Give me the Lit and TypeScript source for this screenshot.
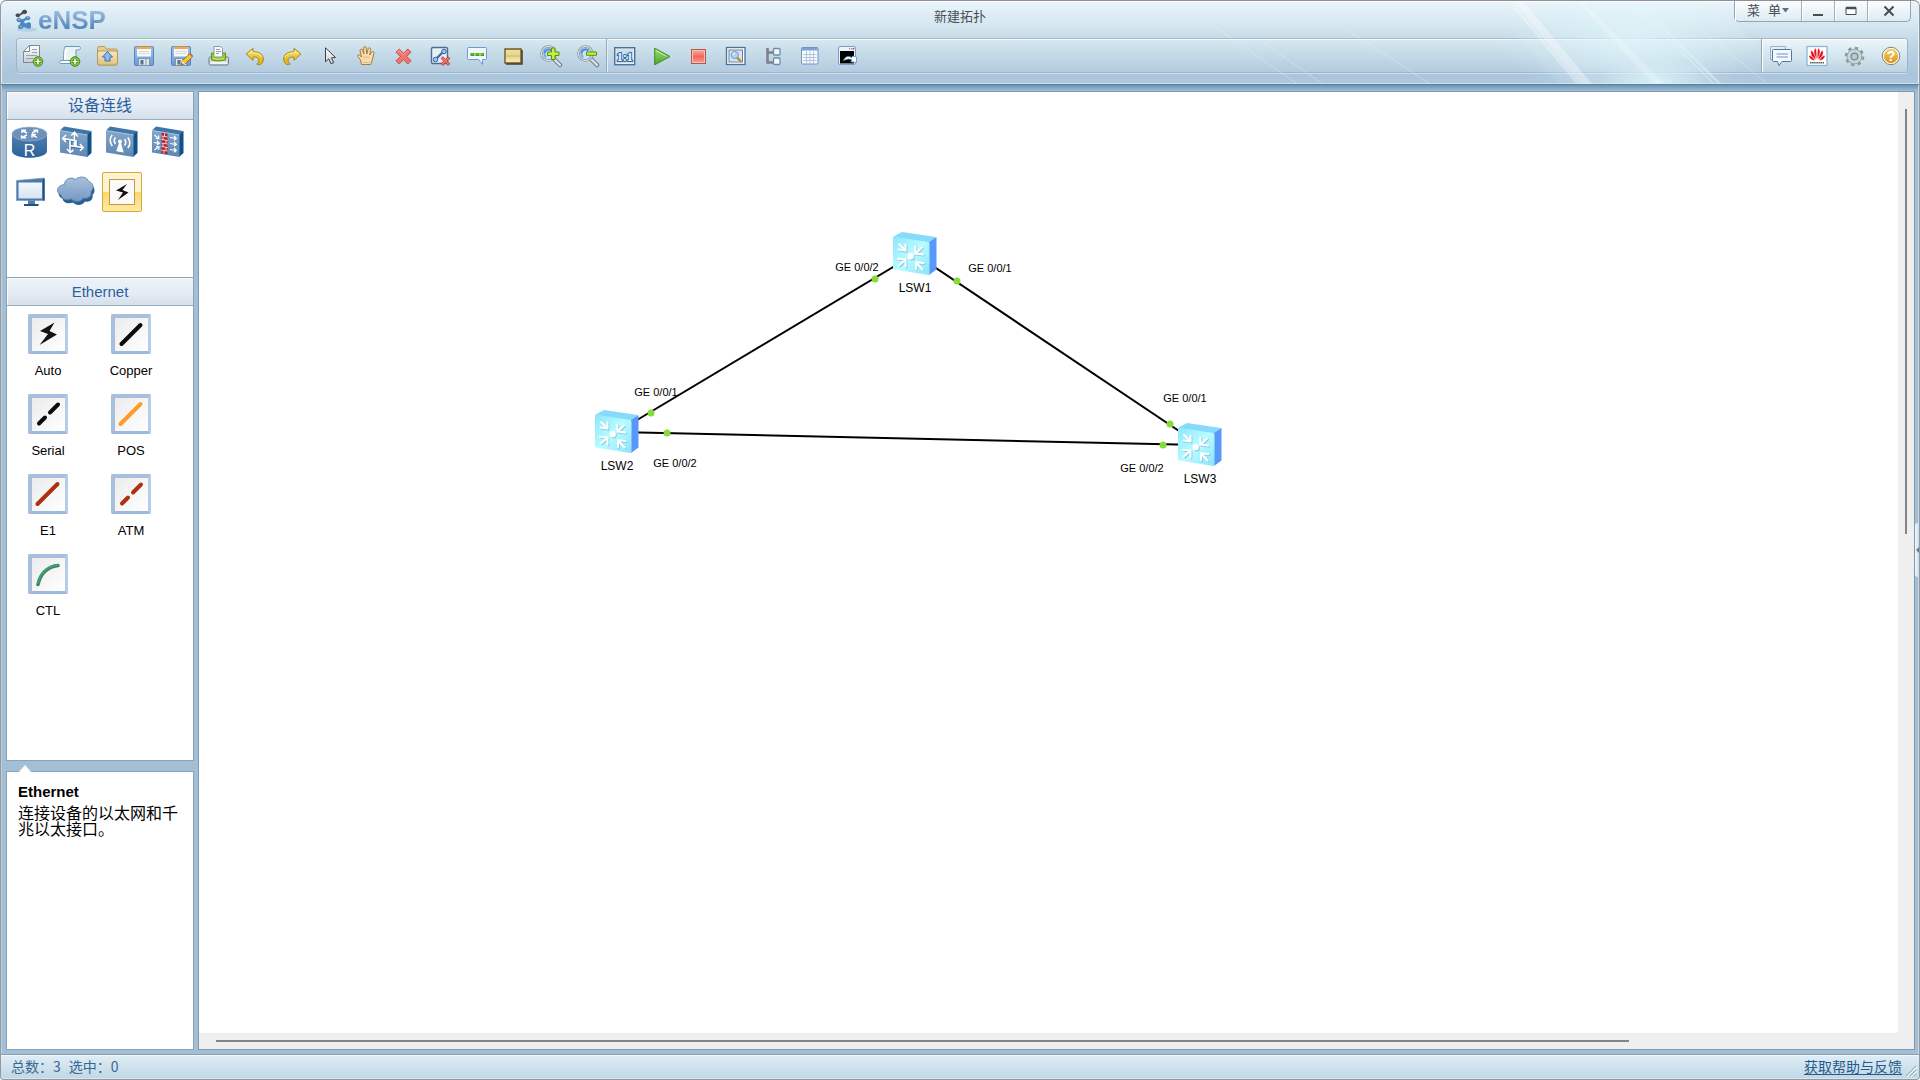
import { LitElement, html, css, svg, TemplateResult } from "lit";
import { customElement, property } from "lit/decorators.js";
import { styleMap } from "lit/directives/style-map.js";

type Art = TemplateResult;

const plusBadge = svg`
  <circle cx="17" cy="17.5" r="4.8" fill="#8fce3a" stroke="#3f8a16"/>
  <path d="M17 14.5v6M14 17.5h6" stroke="#2f6f10" stroke-width="3"/>
  <path d="M17 14.8v5.4M14.3 17.5h5.4" stroke="#fff" stroke-width="1.6"/>`;

const floppy = svg`
  <rect x="2.5" y="2.5" width="19" height="19" rx="1.5" fill="url(#g-blue)" stroke="#5585bd"/>
  <path d="M5 3h14v9.5H5z" fill="#f6f8fb"/>
  <path d="M5 2.5h14v2.6H5z" fill="#f8a944"/>
  <path d="M6.5 7.5h11M6.5 9.5h11" stroke="#d3d9e2"/>
  <path d="M6.5 14.5h11v7h-11z" fill="#dfe5ec" stroke="#8193aa"/>
  <path d="M8.5 16h3v4.5h-3z" fill="#5f7188"/>
  <path d="M14 15v6" stroke="#b5bfcc" stroke-width="2"/>`;

const undoShape = svg`
  <path d="M3.2 10 10 4.4v3.5c6.5-.4 11 2.6 10.2 8.3-.3 1.900-1.200 3.300-2.700 4.300-1 .3-3.200.1-3.800-.5 2-1.200 3-4 1.500-5.700-1.200-1.200-3-1.300-5.200-1.200v3.200z"
    fill="url(#g-gold)" stroke="#a98410" stroke-linejoin="round"/>
  <path d="M5 10l4-3.200v2.200c5-.3 9 1 10 4" fill="none" stroke="#fbf2a8" stroke-width="1"/>`;

const lens = svg`
  <path d="M14.500 14.500l6.500 6.500" stroke="#77818c" stroke-width="4.500" stroke-linecap="round"/>
  <path d="M15 15l6 6" stroke="#dfe3e8" stroke-width="2.300" stroke-linecap="round"/>
  <circle cx="9.500" cy="9.500" r="7" fill="#cfe4fa" fill-opacity=".8" stroke="#8794a3" stroke-width="2.600"/>
  <circle cx="9.500" cy="9.500" r="7" fill="none" stroke="#eef2f6" stroke-width="1"/>
  <path d="M5.500 9.500a4 4 0 0 1 7-2.700" fill="none" stroke="#4f8fdc" stroke-width="2.200"/>
  <path d="M5.300 9a4.200 4.200 0 0 0 2 4" fill="none" stroke="#6ea5e4" stroke-width="1.600"/>`;

const tools: Record<string, Art> = {
  newDoc: svg`
    <path d="M8.500 1.500h10v17h-16v-11z" fill="url(#g-paper)" stroke="#7d8894" stroke-linejoin="round"/>
    <path d="M2.500 7.500h6v-6z" fill="#fff" stroke="#7d8894" stroke-linejoin="round"/>
    <path d="M11 5.500h5M11 8.500h5M5 11.500h11M5 14.500h7" stroke="#9aa3ad"/>${plusBadge}`,
  newScroll: svg`
    <path d="M7 2.500h14c2 0 2 3.500-.5 3.300L18 6v12.500H4.500C6 17 5 7 7 2.500z" fill="#e9f4f9" stroke="#6d9bb4"/>
    <path d="M4 16.500h11c-1.500 1.500-.5 3 1 3H3c-2 0-2-3 1-3z" fill="#f8fcfe" stroke="#6d9bb4"/>
    <path d="M8 5c-1 4-.6 7-1.200 10" stroke="#fff" stroke-width="2" fill="none"/>${plusBadge}`,
  open: svg`
    <path d="M2.500 4.500q0-2 2-2h5l2 2.500h9q2 0 2 2V19q0 2-2 2h-16q-2 0-2-2z" fill="#e3cf96" stroke="#b89a57"/>
    <rect x="2.500" y="7" width="20" height="14" rx="2" fill="url(#g-folder)" stroke="#b89a57"/>
    <path d="M12.500 7.500l5 5.500h-2.500v4h-5v-4H7.500z" fill="#8db9f0" stroke="#3b6fb5" stroke-linejoin="round"/>`,
  save: floppy,
  saveAs: svg`${floppy}
    <path d="M12 21l1.500-4.500 7-6.500 3 3-7 6.500z" fill="#f8c531" stroke="#8a5a12" stroke-width=".8"/>
    <path d="M12 21l1.500-4.500 2.800 3z" fill="#f4dfb8"/><path d="M12 21l.6-1.900 1.200 1.200z" fill="#333"/>
    <path d="M20.500 10l3 3 .8-1.200-2.500-2.500z" fill="#d9643a"/>`,
  print: svg`
    <path d="M3 14.500q0-1.500 1.500-1.500h16.500q1.500 0 1.500 1.500v5q0 1.500-1.500 1.500h-16.500q-1.500 0-1.500-1.500z" fill="#d5dbe1" stroke="#6e7883"/>
    <path d="M5.500 9h14v7q-7 2-14 0z" fill="#94cf26" stroke="#64961c"/>
    <path d="M8 2.500h6.500l2 2V13H8z" fill="#fbfcfd" stroke="#8b97a4"/>
    <path d="M10 5.500h4M10 7.500h5M10 9.500h3" stroke="#8f9aa6"/>
    <path d="M7 14.500q5.500 1.500 11 0" stroke="#c9f063" fill="none"/>
    <path d="M4.500 19h16.500" stroke="#fafbfc" stroke-width="1.500"/>`,
  undo: undoShape,
  redo: svg`<g transform="translate(24 0) scale(-1 1)">${undoShape}</g>`,
  pointer: svg`
    <path d="M8.500 3.800v14l3.300-3 2.200 5 2.700-1.200-2.200-4.800 4-.3z" fill="url(#g-paper)" stroke="#3e4247" stroke-linejoin="round"/>`,
  hand: svg`
    <path d="M7.500 20.500 6.500 16 3.700 12.300c-.6-1.400 1.200-2 2.400-.7L7.500 13 6 6.800c-.2-1.800 2-2.300 2.500-.6L9.800 10 9.600 4c.1-1.900 2.500-1.900 2.700 0l.5 6 1.400-5.300c.6-1.600 2.700-1.200 2.400.6L15.800 11l2-3c1.200-1.300 2.800-.4 2.200 1.200L18.500 15l-1.700 5.500z"
      fill="#f7dcae" stroke="#a87b3e" stroke-linejoin="round"/>
    <path d="M9 13.500q4-1.500 7 .5M8.500 18.500h7.500" stroke="#e3bb7d" fill="none"/>`,
  remove: svg`
    <path d="M5 8.200 8.200 5l4.300 4.300L16.800 5 20 8.200l-4.300 4.300 4.300 4.300-3.200 3.200-4.300-4.300L8.200 20 5 16.800l4.300-4.300z" fill="#f0756b" stroke="#c4504a" stroke-linejoin="round"/>
    <path d="M6.500 8.200 8.200 6.500l4.300 4.300 4.300-4.300" fill="none" stroke="#f9a79d"/>`,
  removeLink: svg`
    <rect x="3.500" y="3.500" width="16" height="16" rx="1.500" fill="#e8eff6" stroke="#4f6d92" stroke-width="1.400"/>
    <path d="M7 16l9-9" stroke="#3f6fa8" stroke-width="2.400"/>
    <circle cx="7.500" cy="15.500" r="2.300" fill="#9fc4ea" stroke="#3a679f"/><circle cx="16" cy="7.500" r="2.300" fill="#9fc4ea" stroke="#3a679f"/>
    <path d="M13 14.500l1.800-1.800 2.700 2.600 2.700-2.600 1.600 1.800-2.600 2.600 2.600 2.600-1.600 1.700-2.700-2.600-2.700 2.600-1.700-1.700 2.600-2.600z" fill="#ef7468" stroke="#a8322c" stroke-width=".8"/>`,
  comment: svg`
    <path d="M3.500 3.500h17q1 0 1 1v10q0 1-1 1H17.500v5l-4-5h-10q-1 0-1-1v-10q0-1 1-1z" fill="#f1f7fd" stroke="#6f9ad0" stroke-linejoin="round"/>
    <path d="M5.500 10.500h4M10.500 10.500h4M15.500 10.500h3.500" stroke="#3f9d14" stroke-width="3"/><path d="M6.500 10h2M11.500 10h2M16 10h2" stroke="#9be03a"/>`,
  rect: svg`
    <path d="M3 5h16v14H3z" fill="url(#g-note)" stroke="#6d5a24" stroke-width="1.400"/>
    <path d="M20 6v14H4" fill="none" stroke="#4d3f17" stroke-width="1.500"/>
    <path d="M4.500 12h13" stroke="#cdb866"/>`,
  zoomIn: svg`${lens}
    <path d="M12.500 4h3.500v4h4v3.500h-4v4h-3.500v-4h-4V8h4z" fill="#c6f03a" stroke="#4e9410"/>`,
  zoomOut: svg`${lens}<path d="M10.500 8h10v3.300h-10z" fill="#c6f03a" stroke="#4e9410"/>`,
  actual: svg`
    <rect x="1.700" y="3.700" width="20" height="17" fill="#e3ecf4" stroke="#4d7298" stroke-width="1.400"/>
    <rect x="3.500" y="5.500" width="16.500" height="13.500" fill="#ccdeed"/>
    <text class="ratio" x="11.700" y="16.500">1:1</text>`,
  play: svg`
    <path d="M4.700 4.200 20 12.500 4.700 20.800z" fill="url(#g-green)" stroke="#3d8a25" stroke-linejoin="round"/>
    <path d="M6 6.500l10.500 5.800" stroke="#c9efae" fill="none"/>`,
  stop: svg`<rect x="4.500" y="5.500" width="14" height="14" fill="url(#g-red)" stroke="#b0574e"/>
    <rect x="5.500" y="6.500" width="12" height="12" fill="none" stroke="#fbc1b8"/>`,
  inspect: svg`
    <rect x="2.500" y="3.500" width="18.500" height="17" fill="#fbfdfe" stroke="#4d7298" stroke-width="1.300"/>
    <rect x="5" y="6" width="13.500" height="12" fill="#d7e4f0" stroke="#6585a8"/>
    <path d="M13 13.500l3.500 3.500" stroke="#b78a2d" stroke-width="2.400" stroke-linecap="round"/>
    <circle cx="10.800" cy="11" r="3.600" fill="#a9d6f8" stroke="#8296ac"/><path d="M9 11a2 2 0 0 1 2-2" stroke="#fff" fill="none"/>`,
  tree: svg`
    <path d="M6.500 4v14.500H13M6.500 8.500H13" stroke="#7c828a" stroke-width="2.600" fill="none"/>
    <rect x="12.500" y="4.500" width="6.500" height="6.500" rx="1" fill="#f3f7fb" stroke="#6e8bab" stroke-width="1.300"/>
    <rect x="12.500" y="14" width="6.500" height="6.500" rx="1" fill="#f3f7fb" stroke="#6e8bab" stroke-width="1.300"/>`,
  table: svg`
    <rect x="3.500" y="3.500" width="16.500" height="16.500" rx="1" fill="#f7fafd" stroke="#6f94c2"/>
    <path d="M4 4h15.500v2.500H4z" fill="#7ba3d4"/>
    <path d="M5 10.500h13.500M5 13.500h13.500M5 16.500h13.500M8.500 7.500v12M12 7.500v12M15.500 7.500v12" stroke="#b3c5dc"/>`,
  terminal: svg`
    <rect x="3.500" y="2.500" width="17" height="18" rx="1.500" fill="#edf4fb" stroke="#7c9cc4"/>
    <path d="M5 7h14v12.500H5z" fill="#000"/>
    <path d="M14 4.700h1.200M16.200 4.700h1.200" stroke="#8793a3" stroke-width="1.400"/><path d="M17.800 4.700h1.400" stroke="#e02020" stroke-width="1.600"/>
    <path d="M8.500 16.500c1.500-4 5-5 8-3l1.300-1.500 3.700 1v5.500l-5.800-.8 1.300-1.700c-2.500-1.500-4.500-1-8.500.5z" fill="#fff" stroke="#5c92cf" stroke-width=".8"/>`,
  chat: svg`
    <path d="M2.500 2.500h15v13h-15z" fill="#dfeef8" stroke="#8fb3d3"/>
    <path d="M5.500 5.500h17q1 0 1 1v10q0 1-1 1h-8.500l-3 4-1.500-4h-4q-1 0-1-1v-10q0-1 1-1z" fill="#f4f9fd" stroke="#5177a6" stroke-linejoin="round"/>
    <path d="M8.500 10h11.500M8.500 13h11.500" stroke="#6f94c4"/>`,
  huawei: svg`
    <rect x="2" y="2.500" width="20" height="19" fill="#fff" stroke="#8db6e0" stroke-width="1.300"/>
    <g fill="#e2131b" stroke="#fff" stroke-width=".5"><path d="M11.700 15.500C8.500 11 8.200 6 10.300 4c1.500 1 1.800 7 1.400 11.500zM12.300 15.500c3.200-4.500 3.500-9.500 1.400-11.500-1.500 1-1.800 7-1.400 11.500z"/>
    <path d="M10.900 15.700C6.500 13.500 4.800 9.500 6.300 6.300c2 .7 4.200 6 4.600 9.400zM13.100 15.700c4.400-2.200 6.100-6.200 4.600-9.400-2 .7-4.200 6-4.600 9.400z"/>
    <path d="M10.200 16.300c-4 .3-6.400-2-6.200-5 2 .2 5 2.700 6.200 5zM13.800 16.300c4 .3 6.400-2 6.200-5-2 .2-5 2.700-6.200 5z"/></g>
    <path d="M5 18.800h14" stroke="#555" stroke-width="1.600" stroke-dasharray="1.500 .6"/>`,
  gear: svg`
    <circle cx="12.500" cy="12.500" r="8.300" fill="none" stroke="#8d9b9f" stroke-width="3" stroke-dasharray="3.260 3.260"/>
    <circle cx="12.500" cy="12.500" r="5.500" fill="none" stroke="#8d9b9f" stroke-width="4.500"/>
    <circle cx="12.500" cy="12.500" r="5.500" fill="none" stroke="#c9d6d6" stroke-width="3"/>
    <circle cx="12.500" cy="12.500" r="3.300" fill="#b7ccd8" stroke="#6f8390"/>`,
  help: svg`
    <circle cx="12" cy="12" r="8.700" fill="#fff" stroke="#8c7f66"/>
    <circle cx="12" cy="12" r="7.200" fill="url(#g-amber)"/>
    <text class="mark" x="12" y="17">?</text>`,
};

const box3d = svg`
  <path d="M4 8.500 8 4.500l27 4.500-3 4z" fill="#3f76a9"/>
  <path d="M31 13l4.500-4.200V31L31 35z" fill="#0f5088"/>
  <path d="M4 8.500 31.500 13v22L4 30.500z" fill="url(#g-steel)"/>
  <path d="M4 8.500 31.500 13" stroke="#a9c1da"/>`;

const devices: Record<string, Art> = {
  router: svg`
    <path d="M2 12v17c0 9 35 9 35 0V12z" fill="url(#g-drum)"/>
    <ellipse cx="19.500" cy="12" rx="17.500" ry="7" fill="#6d92ba" stroke="#93b0cd" stroke-width=".6"/>
    <g stroke="#fff" stroke-width="1.400" fill="none"><path d="M17 11l-5-2.500M12 11V8.300h4M22 11l5-2.300M23.500 8.200h4v2.600M17 13l-5 2.300M16 15.800h-4.500v-2.600M22 13l5 2.300M22 15.800v-3.300h4"/></g>
    <text class="letter" x="19.500" y="34">R</text>`,
  switch: svg`${box3d}
    <g stroke="#173f6b" stroke-opacity=".4" stroke-width="1.800" fill="none" transform="translate(.8 1)"><path d="M7 16.500l13 2.200v6M18.500 10.500V24M14 18v12M13.500 23.500l13 2"/></g>
    <g stroke="#fff" stroke-width="1.600" fill="none"><path d="M7 16.500l13 2.200v6M18.500 10.500V24M14 18v12M13.500 23.500l13 2M10 13l-3.300 3.500L10 20M15.300 13.500l3.200-3.300 3.200 4.400M11 27l3.200 3.500 3.200-2.500M24 22l3.200 3.600-3.200 3"/></g>`,
  ap: svg`${box3d}
    <g stroke="#fff" stroke-width="1.600" fill="none"><path d="M13.500 15.500q-2.500 2.800 0 6.500M10.200 13q-4 4.500 0 11M22.500 17q2.500 3.500 0 6.500M25.800 15.500q4 5.800 0 10.500"/></g>
    <circle cx="18" cy="19.500" r="2" fill="#fff"/><path d="M17.400 20h1.300l3 10.500-7.500-1.200z" fill="#fff"/>`,
  firewall: svg`${box3d}
    <path d="M13.500 10.800l6 1v20.500l-6-1z" fill="#b3202c"/>
    <path d="M13.500 14l6 1M13.500 17.500l6 1M13.500 21l6 1M13.500 24.500l6 1M13.500 28l6 1M16.500 11.500v3M15 15v3M18 18.500v3M15 21.500v3M18 25v3M16 28.500v3" stroke="#fff" stroke-width=".8"/>
    <g stroke="#fff" stroke-width="1.200" fill="none"><path d="M6.500 13l4 3.500M10.700 13.500v3.300l-3-.3M6 20.500l5 .8M9 18.800l2.300 2.500-2.300 1.500M6.500 28l4-3M8 24.500l3 .3-.3 3M22 15.500l6 1M26 14l2.300 2.500-2.300 1.800M22 21.500l6 1M26 20l2.300 2.500-2.300 1.800M22 27.500l6 1M26 26l2.300 2.500-2.300 1.800"/></g>`,
  pc: svg`
    <path d="M6.500 8.500 34.500 6v22.500H6.500z" fill="#4a7aa9" stroke="#7c9fc2" stroke-width=".8"/>
    <path d="M8.500 10.500h23.500V26.500H8.500z" fill="url(#g-screen)"/>
    <path d="M33 7h1.500v21.500H33z" fill="#1a4f84"/>
    <path d="M18 28.500h7v3.500h-7z" fill="#547ca5"/><path d="M14 32h14.500v2H14z" fill="#1d5488"/>`,
  cloud: svg`
    <path d="M9 14c0-6 7-8 11-5 4-4 12-3 13 2 5 1 6 7 2.500 10 1 5-3 7.500-7.500 6.500-3 4.500-9 4.500-12 1-5 2-10 0-10.500-4C0 23 0 15 9 14z" fill="#2a6093" transform="translate(1 2)"/>
    <path d="M8.500 12.500c0-6 7-8 11-5 4-4 12-3 13 2 5 1 6 7 2.500 10 1 5-3 7.500-7.500 6.500-3 4.500-9 4.500-12 1-5 2-10 0-10.500-4-5-1.500-5.500-9.500 3.500-10.500z" fill="url(#g-cloud)" stroke="#557fab" stroke-width=".8"/>`,
  link: svg`
    <rect x="7.500" y="7.500" width="25" height="25" fill="#fbfaf6" stroke="#b89c51"/>
    <path d="M25 12 14 18.500l7 2L16 28l10.500-7.500-6-2.500z" fill="#111"/>`,
};

const cables: { name: string; art: Art }[] = [
  { name: "Auto", art: svg`<path d="M26.500 8.500 12 17l8 3-8.500 11L29 20.500l-7.500-3.500z" fill="#14140f"/>` },
  { name: "Copper", art: svg`<path d="M10.500 30 29.500 11" stroke="#0a0a0c" stroke-width="4" stroke-linecap="round"/>` },
  { name: "Serial", art: svg`<path d="M11 29.500l6-6M22 18.500l8-8" stroke="#0a0a0c" stroke-width="4" stroke-linecap="round"/>` },
  { name: "POS", art: svg`<path d="M9.500 30 29.500 10" stroke="#ff9a2e" stroke-width="4" stroke-linecap="round"/>` },
  { name: "E1", art: svg`<path d="M9.500 30 29.500 10" stroke="#ad3110" stroke-width="4" stroke-linecap="round"/>` },
  { name: "ATM", art: svg`<path d="M11 29.500l6-6M22 18.500l8-8" stroke="#ad3110" stroke-width="4" stroke-linecap="round"/>` },
  { name: "CTL", art: svg`<path d="M10 30.500C12 21 18.500 13 30 11.500" fill="none" stroke="#4b7a62" stroke-width="3.600" stroke-linecap="round"/><path d="M10 29.500C12 20 18 12.500 29.500 11" fill="none" stroke="#31a873" stroke-width="2" stroke-linecap="round"/>` },
];

const gradient = (id: string, ...stops: string[]) => svg`
  <linearGradient id=${id} x1="0" y1="0" x2="0" y2="1">
    ${stops.map((c, i) => svg`<stop offset=${i / (stops.length - 1)} stop-color=${c}/>`)}
  </linearGradient>`;

const gradients: Record<string, string[]> = {
  "g-blue": ["#9cc4f0", "#6b9bd4"],
  "g-gold": ["#f7e36b", "#dcae16"],
  "g-paper": ["#ffffff", "#c9ced4"],
  "g-folder": ["#f6e9c4", "#dfc17a"],
  "g-note": ["#efe0a0", "#e6d68c", "#f5edc0"],
  "g-green": ["#a4dc78", "#4aa52c"],
  "g-red": ["#fbb0a5", "#f2685a", "#f8a397"],
  "g-amber": ["#f6d173", "#dc9410"],
  "g-steel": ["#85a6c9", "#5d87b4"],
  "g-drum": ["#5081b2", "#2a6297"],
  "g-screen": ["#f3f7fd", "#d5e3f4"],
  "g-cloud": ["#a8c0dd", "#7598c2"],
};

/** Inline picture on a square grid; the grid is as wide as it is drawn. */
const picture = (art: Art, size: number) => html`
  <svg class="picture" width=${size} height=${size} viewBox="0 0 ${size} ${size}" aria-hidden="true">
    <defs>${Object.entries(gradients).map(([id, stops]) => gradient(id, ...stops))}</defs>${art}</svg>`;

const pictureStyles = css`
  .picture { display: block; flex: none; }
  .ratio { font: bold 12px "Liberation Serif", serif; fill: #eef6fc; stroke: #2f6aa3; stroke-width: 2px; paint-order: stroke; text-anchor: middle; }
  .mark { font: bold 14px "Liberation Sans", sans-serif; fill: #fff; text-anchor: middle; }
  .letter { font: 16px "Liberation Sans", sans-serif; fill: #fff; text-anchor: middle; }
  button { font: inherit; color: inherit; background: none; border: 0; padding: 0; margin: 0; display: flex; align-items: center; justify-content: center; }
`;

@customElement("tool-bar")
class ToolBar extends LitElement {
  static styles = [pictureStyles, css`
    :host { display: flex; height: 33px; margin: 0 11px 0 15px; border: 1px solid #9eb3c6; border-top-color: #a9b9c8; border-radius: 4px;
      background: linear-gradient(#d8e8f1, #c9dee9 35%, #b3cbe0); box-shadow: inset 0 1px #f2f9fc, 0 1px #d0dfeb; }
    .group { display: flex; gap: 5px; align-items: center; }
    .group button { width: 32px; height: 30px; }
    .zoomed { margin-left: 2px; border-left: 1px solid #94a8bb; padding-left: 2px; box-shadow: inset 1px 0 #e5f0f7; }
    .aside { margin-left: auto; border-left: 1px solid #92a7b8; padding-left: 2px; border-radius: 0 3px 3px 0;
      background: linear-gradient(#edf6fa, #d5e6ef 50%, #bcd3e2); box-shadow: inset 1px 1px #fff; }
  `];

  private buttons(items: [string, string][]) {
    return items.map(([key, label]) => html`<button type="button" title=${label} aria-label=${label}>${picture(tools[key], 24)}</button>`);
  }

  render() {
    return html`
      <div class="group">${this.buttons([
        ["newDoc", "新建拓扑"], ["newScroll", "新建试卷工程"], ["open", "打开文件"], ["save", "保存"],
        ["saveAs", "另存为"], ["print", "打印"], ["undo", "撤销"], ["redo", "恢复"],
        ["pointer", "恢复鼠标"], ["hand", "拖动"], ["remove", "删除"], ["removeLink", "删除连线"],
        ["comment", "文本"], ["rect", "调色板"], ["zoomIn", "放大"], ["zoomOut", "缩小"]])}</div>
      <div class="group zoomed">${this.buttons([
        ["actual", "重置比例"], ["play", "开启设备"], ["stop", "停止设备"], ["inspect", "数据抓包"],
        ["tree", "显示所有接口"], ["table", "显示网格"], ["terminal", "打开拓扑中设备的命令行"]])}</div>
      <div class="group aside">${this.buttons([
        ["chat", "论坛"], ["huawei", "官网"], ["gear", "设置"], ["help", "帮助"]])}</div>`;
  }
}

@customElement("app-header")
class AppHeader extends LitElement {
  static styles = [pictureStyles, css`
    :host { display: flex; flex-direction: column; height: 83px; position: relative; overflow: hidden;
      border-top: 1px solid #918f98; border-bottom: 1px solid #5d8199; border-radius: 6px 6px 0 0;
      background: linear-gradient(#e9f5fb, #d4e6ef 30%, #c2d7e6 50%, #a9c4dc 88%, #aec8de);
      box-shadow: inset 0 1px #fff, inset 0 -1px #c9dfeb, inset 1px 0 #e6f1f8, inset -1px 0 #e6f1f8; }
    .top { display: grid; grid-template-columns: 1fr auto 1fr; height: 37px; padding: 0 8px; align-items: start; }
    .brand { display: flex; align-items: center; height: 30px; padding: 4px 0 0 5px; }
    .word { font: bold 26px/28px "Liberation Sans", Arial, sans-serif; color: transparent;
      background: linear-gradient(#9cc0e6 15%, #4f80b6 85%); background-clip: text; -webkit-background-clip: text; }
    .title { margin: 0; padding-top: 5px; font: 13px/20px "Noto Sans CJK SC", sans-serif; color: #4a4f54; }
    .controls { justify-self: end; display: flex; height: 20px; border: 1px solid #9aa2aa; border-top: 0; border-radius: 0 0 5px 5px;
      background: linear-gradient(#fbfdfe, #dcebf3); color: #444b52; font: 13px/16px "Noto Sans CJK SC", sans-serif; position: relative; z-index: 1; }
    .controls button { width: 33px; border-left: 1px solid #a5adb4; box-shadow: inset 1px 0 #fff; }
    .controls .menu { width: 66px; border-left: 0; gap: 8px; padding-bottom: 2px; }
    .controls .close { width: 43px; }
    .last { display: flex; align-items: center; gap: 1px; }
    .shine { position: absolute; top: 0; right: 0; pointer-events: none; }
    tool-bar { flex: none; }
  `];

  render() {
    return html`
      <div class="top">
        <div class="brand">
          <svg class="picture" width="24" height="26" viewBox="0 0 24 26" aria-hidden="true">
            <ellipse cx="13" cy="22.500" rx="10" ry="2" fill="#aac8e6" opacity=".7"/>
            <path d="M1.500 8.500c0-2 2.500-2.500 4-1.500C6.500 6.500 7 5.500 8 5c0-2.500 4.500-3 5-.5.5 2-1.500 3-3.500 2.300-1 .4-2 1-3 1.200 0 2.500-4.500 3-5 .5z" fill="#4a4b4f"/>
            <path d="M2.500 12.500c.5-2 3.500-2.300 4.500-.5 1.500.5 3 0 4-1 .5-2.300 4.800-2.500 5.300-.2.400 2-2 3-3.800 2.200-1 .3-2 1-2.800 2 .8.8 1.600 1.400 2.800 1.300 1-1.600 4.200-1.200 4.500.8v2.400c.5 2.500-3.800 3.200-5 1h-3c-1 2.400-5 2-5-.5 0-1.500 1-2.300 2-2.700.4-1 .5-1.500.3-2.300C4.500 15.500 2 14.500 2.500 12.500z" fill="#4f87c0"/>
            <path d="M4 12.300l2 .2M6 19l1.500.5M13 11l1.500-.5" stroke="#a9cdf0"/>
          </svg>
          <span class="word">eNSP</span>
        </div>
        <h1 class="title">新建拓扑</h1>
        <div class="controls">
          <button class="menu" type="button"><span>菜</span><span class="last">单
            <svg width="7" height="5" viewBox="0 0 7 5" aria-hidden="true"><path d="M0 0h7L3.500 4.500z" fill="#666d74"/></svg></span></button>
          <button type="button" aria-label="最小化"><svg width="12" height="12" viewBox="0 0 12 12"><path d="M1 10h10" stroke="#474c52" stroke-width="2"/></svg></button>
          <button type="button" aria-label="最大化"><svg width="12" height="12" viewBox="0 0 12 12"><path d="M1 2.500h10v7H1z" fill="#fff" stroke="#474c52"/><path d="M1 3h10" stroke="#474c52" stroke-width="2.500"/></svg></button>
          <button class="close" type="button" aria-label="关闭"><svg width="12" height="12" viewBox="0 0 12 12"><path d="M1.500 1.500l9 9M10.500 1.500l-9 9" stroke="#474c52" stroke-width="2"/></svg></button>
        </div>
      </div>
      <tool-bar></tool-bar>
      <svg class="shine" width="760" height="84" viewBox="0 0 760 84" aria-hidden="true">
        <defs>
          <radialGradient id="glow"><stop offset="0" stop-color="#d8f4fa" stop-opacity=".75"/><stop offset="1" stop-color="#d8f4fa" stop-opacity="0"/></radialGradient>
          <linearGradient id="veil"><stop offset="0" stop-color="#fff" stop-opacity="0"/><stop offset=".5" stop-color="#fff" stop-opacity=".16"/><stop offset="1" stop-color="#fff" stop-opacity="0"/></linearGradient>
        </defs>
        <ellipse cx="470" cy="40" rx="130" ry="60" fill="url(#glow)"/>
        <ellipse cx="500" cy="80" rx="60" ry="22" fill="url(#glow)"/>
        <path d="M330 0h230l70 84H400z" fill="url(#veil)"/>
        <path d="M354 0h10l70 84h-12z" fill="#fff" opacity=".35"/><path d="M349 0h3l70 84h-4z" fill="#fff" opacity=".3"/>
        <path d="M418 0h6l83 84h-12z" fill="#fff" opacity=".22"/>
        <path d="M476 0h2l86 84h-4zM471 0h2l84 84h-2z" fill="#dff9fa" opacity=".45"/>
        <path d="M540 27 610 84M177 22 273 84M43 17l97 67M105 42l60 42" stroke="#e4fafd" opacity=".35" fill="none"/>
      </svg>`;
  }
}

@customElement("side-palette")
class SidePalette extends LitElement {
  static styles = [pictureStyles, css`
    :host { display: flex; flex-direction: column; width: 188px; flex: none; }
    section { background: #fff; border: 1px solid #8aa3bb; box-sizing: border-box; }
    h2 { margin: 0; height: 28px; display: flex; align-items: center; justify-content: center; box-sizing: border-box;
      border-bottom: 1px solid #97abc2; background: linear-gradient(#eef3f9, #e3ebf4 60%, #d5e0eb); box-shadow: inset 1px 1px #f9fbfd;
      font: 15px/20px "Liberation Sans", Arial, sans-serif; color: #2d5f9b; }
    .cjk { font: 16px/20px "Noto Sans CJK SC", sans-serif; padding-bottom: 3px; }
    .kinds { display: grid; grid-template-columns: repeat(4, 40px); gap: 10px 6px; padding: 2px 3px; height: 153px; align-content: start; }
    .kinds button { width: 40px; height: 40px; }
    .kinds .chosen { border: 1px solid #d9a83a; border-radius: 2px; background: linear-gradient(#fdf3cf 50%, #fbd768 50%, #fdeaa4); }
    .list { flex: 1; border-top: 0; }
    .cables { display: grid; grid-template-columns: 82px 82px; gap: 15px 1px; padding-top: 8px; }
    .cable { flex-direction: column; gap: 9px; font: 13px/16px "Liberation Sans", Arial, sans-serif; color: #000; }
    .tile { width: 34px; height: 34px; border: 3px solid #a4c0e2; border-right-color: #b5cceb; border-bottom-color: #9db9dc;
      border-radius: 2px; background: linear-gradient(135deg, #ebebed, #fff); box-shadow: inset 1px 1px #b0bccb; }
    .tile .picture { margin: -3px; }
    .info { position: relative; height: 279px; margin-top: 10px; padding: 12px 7px 12px 11px; }
    .info::before { content: ""; position: absolute; left: 11px; top: -7px; width: 14px; height: 8px; background: #fff; clip-path: polygon(50% 0, 100% 100%, 0 100%); }
    h3 { margin: 0 0 4px; font: bold 15px/16px "Liberation Sans", Arial, sans-serif; color: #000; }
    p { margin: 0; font: 16px/16px "Noto Sans CJK SC", sans-serif; color: #000; }
  `];

  render() {
    const kinds: [string, string][] = [["router", "路由器"], ["switch", "交换机"], ["ap", "无线局域网"], ["firewall", "防火墙"], ["pc", "终端"], ["cloud", "其他设备"], ["link", "设备连线"]];
    return html`
      <section>
        <h2 class="cjk">设备连线</h2>
        <div class="kinds">
          ${kinds.map(([key, label]) => html`<button type="button" class=${key === "link" ? "chosen" : ""} title=${label} aria-label=${label}>${picture(devices[key], 40)}</button>`)}
        </div>
      </section>
      <section class="list">
        <h2>Ethernet</h2>
        <div class="cables">
          ${cables.map((c) => html`<button type="button" class="cable"><span class="tile">${picture(c.art, 40)}</span>${c.name}</button>`)}
        </div>
      </section>
      <section class="info">
        <h3>Ethernet</h3>
        <p>连接设备的以太网和千兆以太接口。</p>
      </section>`;
  }
}

interface Point { x: number; y: number }
interface Device extends Point { name: string }
interface Port extends Point { name: string; dot: Point }

@customElement("topology-canvas")
class TopologyCanvas extends LitElement {
  @property({ attribute: false }) devices: Device[] = [
    { name: "LSW1", x: 716, y: 162 },
    { name: "LSW2", x: 418, y: 340 },
    { name: "LSW3", x: 1001, y: 353 },
  ];
  @property({ attribute: false }) ports: Port[] = [
    { name: "GE 0/0/2", x: 658, y: 175, dot: { x: 676, y: 187 } },
    { name: "GE 0/0/1", x: 791, y: 176, dot: { x: 758, y: 189 } },
    { name: "GE 0/0/1", x: 457, y: 300, dot: { x: 452, y: 321 } },
    { name: "GE 0/0/2", x: 476, y: 371, dot: { x: 468, y: 341 } },
    { name: "GE 0/0/1", x: 986, y: 306, dot: { x: 971, y: 332 } },
    { name: "GE 0/0/2", x: 943, y: 376, dot: { x: 964, y: 353 } },
  ];

  static styles = css`
    :host { flex: 1; min-width: 0; display: grid; grid-template: 1fr 16px / 1fr 16px; background: #efefef; border: 1px solid #8199b0; }
    .sheet { position: relative; background: #fff; overflow: hidden; border-radius: 0 0 3px 0; }
    .links { position: absolute; left: 0; top: 0; width: 100%; height: 100%; }
    .device, .port { position: absolute; transform: translate(-50%, -50%); white-space: nowrap; color: #000; font: 12px/14px "Liberation Sans", Arial, sans-serif; }
    .device { transform: translate(-22px, -22px); width: 44px; display: flex; flex-direction: column; align-items: center; gap: 5px; }
    .device svg { display: block; }
    .port { font-size: 11px; }
    .bar { display: flex; }
    .vertical { flex-direction: column; padding: 17px 0 0 7px; }
    .horizontal { padding: 7px 0 0 17px; }
    .thumb { background: #858585; }
    .vertical .thumb { width: 2px; height: 46%; }
    .horizontal .thumb { height: 2px; width: 84%; }
  `;

  private chip() {
    return html`<svg width="44" height="44" viewBox="0 0 44 44" aria-hidden="true">
      <defs><linearGradient id="face" x1="0" y1="0" x2="1" y2="1"><stop offset="0" stop-color="#8ee6fc"/><stop offset=".5" stop-color="#b8fcff"/><stop offset="1" stop-color="#8ce3fb"/></linearGradient></defs>
      <path d="M0 6q0-1.500 1.500-2L9 0l34 5-6.500 5.500z" fill="#86dafc"/>
      <path d="M35.500 10.500 43.500 5v32.500L36 43z" fill="#5a97fb"/>
      <path d="M0 6q0-1.500 1.500-1.200L35 10q1.500.3 1.500 1.800V42q0 1.200-1.500 1L1.500 37.500Q0 37.200 0 36z" fill="url(#face)"/>
      ${[["#86cbe4", 0.9], ["#ffffff", 0]].map(([color, shift]) => svg`
        <g transform="translate(${shift} ${shift})" stroke=${color} stroke-width="2" fill="none" stroke-linecap="round" stroke-linejoin="round">
          <path d="M6 12l6.500 6.500M12.500 12.500V18.500L5.500 17.500M29 15.500l-6.500 6M22.300 14.500v7L30 22.500M6 33.500l6.500-6M5 26.800l7.500.7V34.500M29.500 37.500l-6.500-7M30.500 31l-7.500-.8V37"/>
          <circle cx="17.700" cy="24.300" r="2.200" fill=${color}/>
        </g>`)}
    </svg>`;
  }

  render() {
    const [a, b, c] = this.devices;
    const at = (p: Point) => styleMap({ left: `${p.x}px`, top: `${p.y}px` });
    return html`
      <div class="sheet">
        <svg class="links" aria-hidden="true">
          ${[[a, b], [a, c], [b, c]].map(([p, q]) => svg`<line x1=${p.x} y1=${p.y} x2=${q.x} y2=${q.y} stroke="#000" stroke-width="2"/>`)}
          ${this.ports.map((p) => svg`<circle cx=${p.dot.x} cy=${p.dot.y} r="3.500" fill="#86db3b"/>`)}
        </svg>
        ${this.devices.map((d) => html`<div class="device" style=${at(d)}>${this.chip()}<span>${d.name}</span></div>`)}
        ${this.ports.map((p) => html`<span class="port" style=${at(p)}>${p.name}</span>`)}
      </div>
      <div class="bar vertical"><div class="thumb"></div></div>
      <div class="bar horizontal"><div class="thumb"></div></div>`;
  }
}

@customElement("app-root")
class AppRoot extends LitElement {
  static styles = css`
    :host { display: flex; flex-direction: column; min-height: 100vh; box-sizing: border-box; background: #a3bfd6;
      border: solid #95989e; border-width: 0 1px 1px; border-radius: 6px 6px 4px 4px; }
    app-header { flex: none; }
    main { flex: 1; display: flex; gap: 4px; padding: 6px 4px 4px 5px; position: relative;
      background: linear-gradient(#6594b4, #a3bfd6 6px); box-shadow: inset -1px 0 #c5d8e6, inset 1px 0 #bdd1e1; }
    .handle { position: absolute; right: 0; top: 438px; width: 4px; height: 54px; border: 0; padding: 0; border-radius: 3px 0 0 3px;
      background: linear-gradient(90deg, #f4fafe, #c6dbea); display: flex; align-items: center; justify-content: flex-end; }
    footer { flex: none; height: 24px; display: flex; align-items: center; gap: 8px; padding: 0 2px 0 10px; border-top: 1px solid #8d9fae;
      background: linear-gradient(#e0edf5, #bfd7e6); box-shadow: inset 0 1px #f2f8fb, inset 0 -1px #d7e6ef;
      font: 14px/20px "Noto Sans CJK SC", sans-serif; color: #3a6791; border-radius: 0 0 4px 4px; }
    footer span, footer a { padding-bottom: 2px; }
    a { margin-left: auto; color: #245b8d; text-underline-offset: 2px; }
    .grip { align-self: flex-end; margin: 0 0 2px -5px; }
  `;

  render() {
    return html`
      <app-header></app-header>
      <main>
        <side-palette></side-palette>
        <topology-canvas></topology-canvas>
        <button class="handle" type="button" aria-label="展开侧栏"><svg width="3" height="6" viewBox="0 0 3 6"><path d="M3 0v6L0 3z" fill="#5b7f9d"/></svg></button>
      </main>
      <footer>
        <span>总数：3</span><span>选中：0</span>
        <a href="#help">获取帮助与反馈</a>
        <svg class="grip" width="12" height="12" viewBox="0 0 12 12" aria-hidden="true"><path d="M1 11 11 1M5 11l6-6M9 11l2-2" stroke="#93aabb"/><path d="M2 12 12 2M6 12l6-6" stroke="#f3f8fb"/></svg>
      </footer>`;
  }
}
